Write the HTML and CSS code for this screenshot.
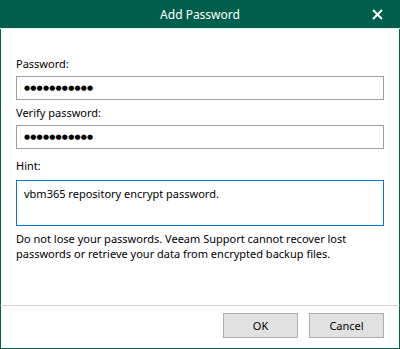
FILE: index.html
```html
<!DOCTYPE html>
<html lang="en">
<head>
    <meta charset="UTF-8">
    <title>Add Password</title>
    <link rel="stylesheet" href="styles.css">
</head>
<body>
    <div class="dialog">
        <div class="titlebar">
            <span class="title">Add Password</span>
            <span class="close-btn">
                <svg width="11" height="11" viewBox="0 0 11 11">
                    <path d="M1 1 L10 10 M10 1 L1 10" stroke="#fff" stroke-width="2" fill="none"/>
                </svg>
            </span>
        </div>

        <div class="content">
            <label class="field-label">Password:</label>
            <div class="text-box"><span class="dots">●●●●●●●●●●●</span></div>

            <label class="field-label second">Verify password:</label>
            <div class="text-box"><span class="dots">●●●●●●●●●●●</span></div>

            <label class="field-label hint-label">Hint:</label>
            <div class="hint-box">vbm365 repository encrypt password.</div>

            <p class="warning">
                Do not lose your passwords. Veeam Support cannot recover lost
                passwords or retrieve your data from encrypted backup files.
            </p>
        </div>

        <div class="footer">
            <button class="btn">OK</button>
            <button class="btn">Cancel</button>
        </div>
    </div>
</body>
</html>
```

FILE: styles.css
```css
* {
    margin: 0;
    padding: 0;
    box-sizing: border-box;
}

body {
    font-family: "Noto Sans", "Open Sans", sans-serif;
    font-size: 11px;
    color: #000;
    background: #fff;
}

.dialog {
    width: 400px;
    height: 349px;
    display: flex;
    flex-direction: column;
}

.titlebar {
    height: 29px;
    background: #005f4b;
    color: #fff;
    display: flex;
    align-items: center;
    justify-content: center;
    position: relative;
    border-bottom: 1px solid #e6efed;
}

.title {
    font-size: 12px;
}

.close-btn {
    position: absolute;
    right: 17px;
    top: 9px;
    display: flex;
}

.content {
    flex: 1;
    padding: 27px 15px 0;
    border-left: 1px solid #005f4b;
    border-right: 1px solid #005f4b;
}

.field-label {
    display: block;
    line-height: 16px;
    margin-bottom: 4px;
}

.field-label.second {
    margin-top: 5px;
}

.field-label.hint-label {
    margin-top: 9px;
    margin-bottom: 6px;
}

.text-box {
    height: 24px;
    border: 1px solid #a0a0a0;
    padding: 0 7px;
    display: flex;
    align-items: center;
}

.dots {
    font-family: "DejaVu Sans", sans-serif;
    font-size: 7px;
    letter-spacing: 0.2px;
}

.hint-box {
    height: 46px;
    border: 1px solid #0078d7;
    padding: 5px 7px;
    line-height: 16px;
}

.warning {
    margin-top: 5px;
    line-height: 15px;
}

.footer {
    height: 44px;
    border-top: 1px solid #d4d4d4;
    border-left: 1px solid #005f4b;
    border-right: 1px solid #005f4b;
    border-bottom: 1px solid #005f4b;
    display: flex;
    justify-content: flex-end;
    gap: 11px;
    padding: 7px 15px 0;
}

.btn {
    width: 75px;
    height: 25px;
    background: #e1e1e1;
    border: 1px solid #adadad;
    font-family: "Noto Sans", "Open Sans", sans-serif;
    font-size: 11px;
    color: #000;
}
```
